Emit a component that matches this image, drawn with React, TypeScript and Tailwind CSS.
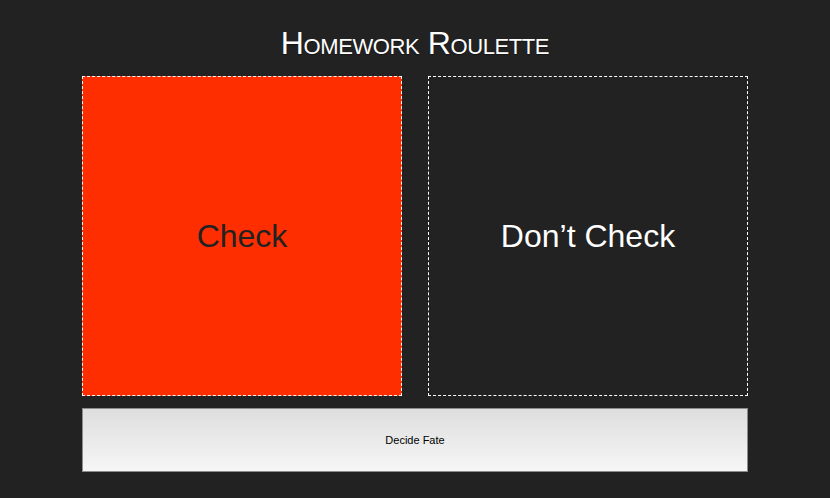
import { useState } from 'react';

const FONT = { fontFamily: '"Liberation Sans", Arial, Helvetica, sans-serif' };

export default function App() {
  const [choice, setChoice] = useState<'check' | 'skip'>('check');

  const decide = () => setChoice(Math.random() < 0.5 ? 'check' : 'skip');

  return (
    <div className="min-h-screen w-full bg-[#222222]" style={FONT}>
      <div className="mx-auto w-[666px]">
        <h1
          className="pt-[27px] pb-[17px] text-center text-[32px] leading-[32px] font-normal tracking-[-0.4px] text-white [font-variant:small-caps] [text-shadow:0_1px_1px_rgba(0,0,0,0.4)]"
        >
          Homework Roulette
        </h1>

        <div className="flex gap-[26px]">
          <div
            className={`flex h-[320px] w-[320px] items-center justify-center border border-dashed border-white text-[32px] ${
              choice === 'check' ? 'bg-[#ff2e00] text-[#222222]' : 'text-white'
            }`}
          >
            Check
          </div>
          <div
            className={`flex h-[320px] w-[320px] items-center justify-center border border-dashed border-white text-[32px] ${
              choice === 'skip' ? 'bg-[#ff2e00] text-[#222222]' : 'text-white'
            }`}
          >
            Don’t Check
          </div>
        </div>

        <button
          onClick={decide}
          className="mt-3 flex h-[64px] w-full items-center justify-center border border-[#8c8c8c] bg-gradient-to-b from-[#dedede] to-[#f6f6f6] text-[11px] text-black"
        >
          Decide Fate
        </button>
      </div>
    </div>
  );
}
